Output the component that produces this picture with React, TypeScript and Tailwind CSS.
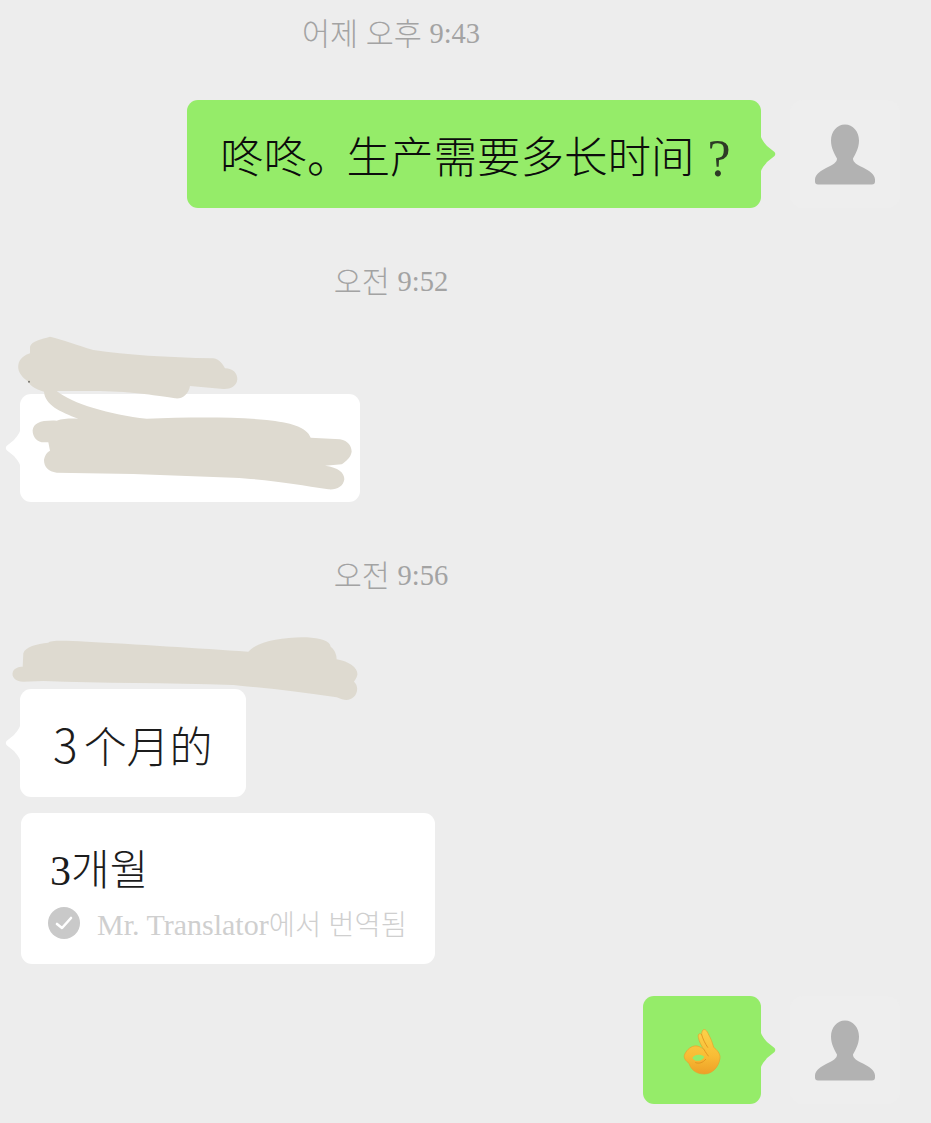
import * as React from 'react';

function Timestamp({ day, time }: { day: string; time: string }) {
  return (
    <div className="flex h-[66px] w-[782px] items-center justify-center font-['Liberation_Serif','Noto_Sans_CJK_KR',serif] text-[28.5px] font-light whitespace-pre text-[#a3a3a3]">
      <span className="pt-1.5 text-[30.5px]">{day} </span>
      <span className="pt-0.5">{time}</span>
    </div>
  );
}

function PersonIcon() {
  return (
    <svg viewBox="0 0 60 60" className="h-[61px] w-[60px]" fill="#b2b2b2">
      <path d="M30 0C38 0 44 7 44 16C44 24 40 30 38 34C38 38 42 40 48 43C54 46 60 50 60 55V57Q60 60 57 60H3Q0 60 0 57V55C0 50 6 46 12 43C18 40 22 38 22 34C20 30 16 24 16 16C16 7 22 0 30 0Z" />
    </svg>
  );
}

function OkHand() {
  return (
    <svg viewBox="0 0 165 186" className="h-[62px] w-[55px]">
      <defs>
        <linearGradient id="hand" x1="0" y1="0" x2="0" y2="1">
          <stop offset="0" stopColor="#fbd24a" />
          <stop offset="0.6" stopColor="#f8bc35" />
          <stop offset="1" stopColor="#ee9f27" />
        </linearGradient>
      </defs>
      <path
        fill="url(#hand)"
        stroke="#e9a02a"
        strokeWidth="2"
        d="M84 24C90 20 96 26 100 36C108 50 112 62 116 76C126 84 136 94 135 108C132 135 112 156 88 156C64 156 48 144 42 124C34 118 26 110 28 100C32 88 44 74 58 72C68 70 80 76 88 84C80 74 72 58 70 46C68 36 74 32 80 38C80 32 81 27 84 24Z"
      />
      <path fill="#93ec6b" d="M52 108C60 96 76 96 88 104C84 114 70 118 62 116C58 114 54 112 52 108Z" />
      <path fill="none" stroke="#de8f1d" strokeWidth="2.5" strokeLinecap="round" d="M80 38C84 52 90 64 98 76M88 84C92 92 96 96 100 102M62 122C72 126 84 122 92 112" />
    </svg>
  );
}

// Speech tail, drawn pointing right; incoming bubbles mirror it
function BubbleTail({ className, fill }: { className: string; fill: string }) {
  return (
    <svg viewBox="0 0 15 34" className={`absolute top-[37px] h-[34px] w-[15px] ${className}`} fill={fill}>
      <path d="M0 0C2 5 4 6 6 9L13.5 15Q15 17 13.5 19L6 25C4 28 2 29 0 34Z" />
    </svg>
  );
}

function OutgoingBubble({ className, children }: { className: string; children: React.ReactNode }) {
  return (
    <div className="flex justify-end gap-[29px] pr-[31px]">
      <div className={`relative flex h-[108px] items-center rounded-[11px] bg-[#95ec69] ${className}`}>
        <BubbleTail className="left-full" fill="#95ec69" />
        {children}
      </div>
      <div className="flex h-[108px] w-[110px] items-center justify-center rounded-xl bg-[#eeeeee]">
        <PersonIcon />
      </div>
    </div>
  );
}

function IncomingBubble({ className, children }: { className: string; children?: React.ReactNode }) {
  return (
    <div className={`relative flex h-[108px] items-center rounded-[11px] bg-white ${className}`}>
      <BubbleTail className="right-full -scale-x-100" fill="#ffffff" />
      {children}
    </div>
  );
}

export default function App() {
  return (
    <div className="relative h-[1123px] w-[931px] overflow-hidden bg-[#ededed]">
      <Timestamp day="어제 오후" time="9:43" />

      <div className="mt-[34px]">
        <OutgoingBubble className="w-[574px] pt-2.5 pl-[33px]">
          <span className="font-['Noto_Sans_CJK_SC',sans-serif] text-[43.5px] leading-none font-light whitespace-nowrap text-[#0c0c0c]">
            咚咚。
            <span className="-ml-1">生产需要多长时间</span>
            <span className="ml-[13px] align-[-3px] font-['Liberation_Serif',serif] text-[52px] leading-none text-[#2e3a26]">?</span>
          </span>
        </OutgoingBubble>
      </div>

      <div className="mt-10">
        <Timestamp day="오전" time="9:52" />
      </div>

      <div className="mt-20 pl-5">
        <IncomingBubble className="w-[340px]" />
      </div>

      <div className="mt-10">
        <Timestamp day="오전" time="9:56" />
      </div>

      <div className="mt-[81px] flex flex-col items-start gap-4 pl-5">
        <IncomingBubble className="w-[226px] pl-[33px]">
          <span className="font-['Noto_Sans_CJK_SC',sans-serif] text-[43px] leading-none font-light whitespace-nowrap text-[#1c1c1c]">
            <span className="mr-[6px] text-[46px]">3</span>个月的
          </span>
        </IncomingBubble>

        <div className="ml-px flex h-[151px] w-[414px] flex-col rounded-[11px] bg-white pt-[35px] pl-[29px]">
          <span className="font-['Liberation_Serif','Noto_Sans_CJK_KR',serif] text-[42px] leading-[46px] font-light text-[#1c1c1c]">
            3개월
          </span>
          <div className="mt-[13px] flex items-start gap-[17px]">
            <span className="-ml-[2px] flex size-8 items-center justify-center rounded-full bg-[#c9c9c9]">
              <svg viewBox="0 0 32 32" className="size-8" fill="none" stroke="#ffffff" strokeWidth="2.6" strokeLinecap="round" strokeLinejoin="round">
                <path d="M9 17l5 4 9-10" />
              </svg>
            </span>
            <span className="mt-[2px] font-['Liberation_Serif','Noto_Sans_CJK_KR',serif] text-[28.5px] leading-8 font-light whitespace-nowrap text-[#cfcfcf]">
              <span className="text-[30px]">Mr. Translator</span>에서 번역됨
            </span>
          </div>
        </div>
      </div>

      <div className="mt-8">
        <OutgoingBubble className="w-[118px] pt-1.5 pl-8">
          <OkHand />
        </OutgoingBubble>
      </div>

      {/* hand-drawn scribbles over the sender names and the hidden message */}
      <svg viewBox="0 0 1140 600" className="absolute top-[320px] left-0 h-[200px] w-[380px]" fill="#dedad0">
        <path d="M90 80C95 62 125 58 150 50C190 60 230 75 280 90C380 105 500 112 640 115C660 118 670 135 675 145C700 145 712 160 712 178C710 200 690 208 670 207L570 198C565 225 545 238 525 235C480 228 400 215 300 213L170 213C215 250 330 285 440 296C560 292 700 290 800 300C870 308 920 320 932 353L1020 358C1045 362 1055 380 1055 395C1052 415 1035 425 1025 433L975 437C1015 442 1033 458 1033 478C1030 500 1010 510 985 508C900 495 820 480 700 473L400 462L170 458C145 455 132 440 132 420C135 405 140 398 150 392L145 367L125 367C105 362 97 345 98 330C102 310 120 300 170 302C190 295 215 295 235 296C180 275 135 255 132 215C100 205 90 195 85 185C65 170 52 155 55 135C58 115 75 105 90 100Z" />
        <circle cx="87" cy="185" r="3" fill="#77756f" />
      </svg>
      <svg viewBox="0 0 1350 570" className="absolute top-[620px] left-0 h-[190px] w-[450px]" fill="#dedad0">
        <path d="M70 100C75 80 110 72 145 68C150 60 200 62 260 65C400 72 600 85 745 95C770 65 850 50 920 52C960 55 990 62 992 80C1005 90 1010 105 1010 118C1050 125 1075 145 1072 165C1068 178 1065 180 1062 185C1075 195 1075 220 1060 232C1045 245 1030 240 1010 232C900 215 800 205 700 195C500 188 300 190 130 183L70 185C45 185 35 170 38 158C40 145 55 140 68 140Z" />
      </svg>
    </div>
  );
}
